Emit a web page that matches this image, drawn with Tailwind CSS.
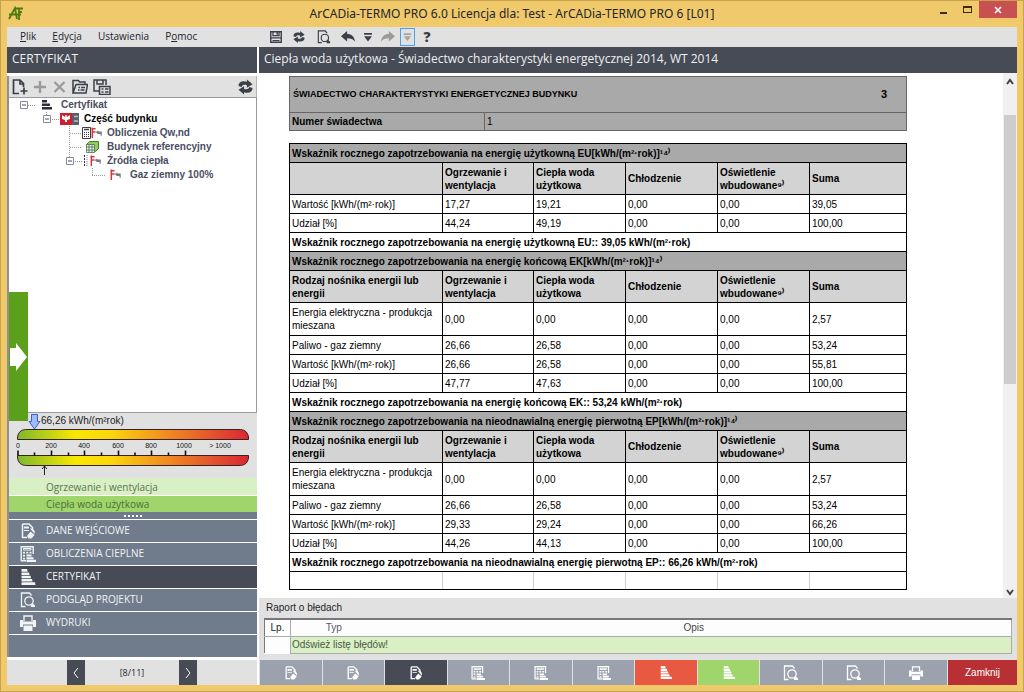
<!DOCTYPE html>
<html lang="pl">
  <head>
    <meta charset="UTF-8" />
    <title>ArCADia-TERMO PRO 6.0</title>
    <meta name="viewport" content="width=device-width, initial-scale=1.0" />

    <!-- Tailwind CSS CDN -->
    <script src="https://cdn.jsdelivr.net/npm/@tailwindcss/browser@4"></script>
  </head>
  <body class="flex min-h-screen flex-col border border-[#c9a24c] bg-[#f0c96a] px-[6px] pb-[6px] font-['Open_Sans',sans-serif] text-xs text-[#22252b]">
    <!-- Ikony -->
    <svg class="hidden">
      <defs>
        <symbol id="i-edit" viewBox="0 0 16 16">
          <path d="M2.500 1h6.500L12.500 4.500V6M7 14.500H2.500V1" fill="none" stroke="currentColor" stroke-width="1.500" />
          <path d="M4 3.500h5v2H4zM4 7h5v1H4z" fill="currentColor" />
          <path d="M10 5.500c3.500-.5 5.500 2 4.500 5.500L13 9z" fill="currentColor" />
          <path d="M10.500 8.500l4 3.500-3 3.500H8.500L7 13z" fill="currentColor" />
        </symbol>
        <symbol id="i-calc" viewBox="0 0 16 16">
          <path d="M1.200 15V.7h12V8M1 14.800H6" fill="none" stroke="currentColor" stroke-width="1.400" />
          <path d="M3.500 2.500h7.500v1.500H3.500z" fill="none" stroke="currentColor" />
          <path d="M3 5.800h2v1.700H3zM6.200 5.800h2v1.700h-2zM9.500 5.800h2v1.700h-2zM3 8.700h2v1.700H3zM3 11.700h2v1.700H3zM6.500 8.500h5v2h-5zM6.500 11.200h7v2h-7zM6.500 13.800H16V16H6.500z" fill="currentColor" />
        </symbol>
        <symbol id="i-cert" viewBox="0 0 16 16">
          <path d="M1.500 0H7l.7 2.700H1.500zM1.500 3.400H9l.6 2.600H1.500zM1.500 6.700h9l.6 2.600H1.500zM1.500 10h10.500l.6 2.500H1.500zM1.500 13.200h13.500l.5 2.800h-14z" fill="currentColor" />
        </symbol>
        <symbol id="i-preview" viewBox="0 0 16 16">
          <path d="M5.500 14.500h-4V1h8l2 2.500" fill="none" stroke="currentColor" stroke-width="1.300" />
          <circle cx="9" cy="9" r="4.200" fill="none" stroke="currentColor" stroke-width="1.300" />
          <path d="M11.500 11.500l3 3M11 14h4" stroke="currentColor" stroke-width="2" />
        </symbol>
        <symbol id="i-print" viewBox="0 0 16 16">
          <path d="M4 6V1h8v5" fill="none" stroke="currentColor" stroke-width="1.400" />
          <path d="M0 5h3v1.500h10V5h3v7h-3V9.500H3V12H0z" fill="currentColor" />
          <path d="M3.500 10.500h9V16h-9z" fill="currentColor" />
        </symbol>
        <symbol id="i-refresh" viewBox="0 0 16 16">
          <path d="M.5 7C.5 2.500 4.500 1 9.500 2.500V0l6 5-6 3.800V6C6.500 5.300 4.500 5.500 4 8z" fill="currentColor" />
          <path d="M15.500 9c0 4.500-4 6-9 4.500V16l-6-5 6-3.800V10c3 .7 5 .5 5.500-2z" fill="currentColor" />
        </symbol>
        <symbol id="i-save" viewBox="0 0 16 16">
          <path d="M2 2h12v12H2z" fill="none" stroke="currentColor" stroke-width="1.600" />
          <path d="M4.500 2v4.500h7V2M2 9h12" fill="none" stroke="currentColor" stroke-width="1.400" />
          <path d="M8.500 2.500h2V5h-2zM4 11.500h8v1H4z" fill="currentColor" />
        </symbol>
        <symbol id="i-undo" viewBox="0 0 16 16">
          <path d="M0 7l7-6v3.500c5 0 8.500 3 9 9C14 10.500 11 9.500 7 9.500V13z" fill="currentColor" />
        </symbol>
        <symbol id="i-down" viewBox="0 0 16 16">
          <path d="M3.500 3.500h9v2h-9zM3.500 7h9L8 13z" fill="currentColor" />
        </symbol>
        <symbol id="i-tap" viewBox="0 0 14 14">
          <path d="M2.500 13V1.500M1.500 3H6M2 6.500h4" fill="none" stroke="#d9323a" stroke-width="1.600" />
          <path d="M6.500 6.500h5.500v4M8.500 5v3h3" fill="none" stroke="#77787c" stroke-width="1.300" />
        </symbol>
        <symbol id="i-box" viewBox="0 0 8 8">
          <path d="M.5.5h7v7h-7z" fill="#fff" stroke="#8a8a8a" />
          <path d="M2 4h4" stroke="#33508f" />
        </symbol>
      </defs>
    </svg>

    <!-- Pasek tytułu -->
    <header class="flex h-[26px] items-start">
      <svg class="mt-[5px] ml-px h-[15px] w-[15px]" viewBox="0 0 15 15" fill="none" stroke="#4f7a12" stroke-width="1.800">
        <path d="M1 13L7 2l2 11M1 8.500h12M7.500 2.500H15M11 3v11M11 6h3" />
      </svg>
      <h1 class="flex-1 pt-[4px] pl-[70px] text-center text-[12px] leading-[18px] font-['Noto_Sans',sans-serif]">ArCADia-TERMO PRO 6.0 Licencja dla: Test - ArCADia-TERMO PRO 6 [L01]</h1>
      <div class="flex h-[17px]">
        <button aria-label="Minimalizuj" class="flex w-6 items-center justify-center pt-[6px]"><span class="h-[2px] w-[7px] bg-[#3a2a10]"></span></button>
        <button aria-label="Maksymalizuj" class="flex w-6 items-center justify-center"><span class="h-[7px] w-[9px] border border-t-2 border-[#3a2a10]"></span></button>
        <button aria-label="Zamknij okno" class="flex w-[38px] items-center justify-center bg-[#c75050]">
          <svg class="h-2 w-2" viewBox="0 0 8 8" stroke="#fff" stroke-width="1.600"><path d="M1 1l6 6M7 1L1 7" /></svg>
        </button>
      </div>
    </header>

    <!-- Menu i pasek narzędzi -->
    <div class="flex h-5 items-center bg-[#e1e1e1] text-[10px]">
      <nav class="flex w-[262px] gap-4 pl-[13px]">
        <a href="#"><u>P</u>lik</a>
        <a href="#"><u>E</u>dycja</a>
        <a href="#">Ustawienia</a>
        <a href="#">P<u>o</u>moc</a>
      </nav>
      <div class="flex items-center text-[#3b3f48]">
        <button aria-label="Zapisz" class="flex w-6"><svg class="h-[14px] w-[14px]"><use href="#i-save" /></svg></button>
        <button aria-label="Odśwież" class="flex w-6"><svg class="h-3 w-3"><use href="#i-refresh" /></svg></button>
        <button aria-label="Podgląd" class="flex w-6"><svg class="h-[14px] w-[14px]"><use href="#i-preview" /></svg></button>
        <button aria-label="Cofnij" class="flex w-5"><svg class="h-[14px] w-[14px]"><use href="#i-undo" /></svg></button>
        <button aria-label="Lista cofania" class="flex w-5"><svg class="h-[14px] w-[14px]"><use href="#i-down" /></svg></button>
        <button aria-label="Ponów" class="flex w-[19px] text-[#9a9a9a]"><svg class="h-[14px] w-[14px] -scale-x-100"><use href="#i-undo" /></svg></button>
        <button aria-label="Lista ponawiania" class="flex border border-[#4ba0ea] text-[#a5a5a5]"><svg class="h-4 w-[13px]"><use href="#i-down" /></svg></button>
        <button aria-label="Pomoc" class="w-6 text-[14px] leading-4 font-extrabold">?</button>
      </div>
    </div>

    <div class="flex flex-1 gap-[2px] bg-white">
      <!-- Lewy panel -->
      <aside class="flex w-[250px] shrink-0 flex-col">
        <h2 class="mb-[3px] h-[26px] bg-[#464b55] pl-[5px] text-[12px] leading-6 text-[#eef0f3]">CERTYFIKAT</h2>
        <div class="flex flex-1 flex-col border-l-2 border-[#8f8f98]">
          <div class="flex h-[21px] items-center gap-[5px] border-r border-[#b5b5b5] bg-[#e1e1e1] px-[3px] text-[#3b3f48]">
            <button aria-label="Nowy"><svg class="h-4 w-4" viewBox="0 0 16 16" fill="none" stroke="currentColor" stroke-width="1.700"><path d="M7 14.500H1.500V1H8l3.500 3.500V8M8 1v4h4M12 8.500v7M8.500 12h7" /></svg></button>
            <button aria-label="Dodaj"><svg class="h-4 w-[14px]" viewBox="0 0 14 16" stroke="#999" stroke-width="2.400"><path d="M7 2v12M1 8h12" /></svg></button>
            <button aria-label="Usuń"><svg class="h-4 w-[15px]" viewBox="0 0 15 16" stroke="#999" stroke-width="2.200"><path d="M2.500 3l10 10M12.500 3l-10 10" /></svg></button>
            <button aria-label="Otwórz"><svg class="h-4 w-4" viewBox="0 0 16 16" fill="none" stroke="currentColor" stroke-width="1.500"><path d="M1 14V1.500h5.500l1 1.500H13v2.500M1 14L4 5.500H15.500L14 14zM6.500 8.500h1.500M9 8.500h4M6 11h1.500M8.500 11h4" /></svg></button>
            <button aria-label="Zapisz jako"><svg class="h-4 w-[18px]" viewBox="0 0 18 16" fill="none" stroke="currentColor" stroke-width="1.500"><path d="M6 12H1V1h12v5M4 1v4h6V1M6.500 7.500h10.500v8H6.500zM8.500 10h2M12 10h3.500M8.500 13h2M12 13h3.500" /></svg></button>
            <button aria-label="Odśwież drzewo" class="ml-auto"><svg class="h-4 w-[15px]"><use href="#i-refresh" /></svg></button>
          </div>

          <!-- Drzewo -->
          <ul class="flex-1 border-t border-r border-b border-[#9a9aa2] bg-white text-[10px] leading-[14px] font-bold text-[#4a4e63] font-['Liberation_Sans',Arial,sans-serif]">
            <li class="flex h-[14px] gap-2">
              <svg class="h-[14px] w-[44px]" viewBox="9 0 44 14">
                <path d="M28 7.500h8" stroke="#999" stroke-dasharray="1 1" />
                <use href="#i-box" x="20" y="3" width="8" height="8" />
                <path d="M42 2h5v2.500h-5zM42 5.500h8v2.500h-8zM42 9h10v2.500H42z" fill="#2b2e33" />
              </svg>
              Certyfikat
            </li>
            <li class="flex h-[14px] gap-[5px] text-black">
              <svg class="h-[14px] w-[70px]" viewBox="9 0 70 14">
                <path d="M46.500 0v4M50 7.500h9" stroke="#999" stroke-dasharray="1 1" />
                <use href="#i-box" x="43" y="3" width="8" height="8" />
                <path d="M60 1h12v12H60z" fill="#cf1f2c" />
                <path d="M62 3l3 2 .5-2h1l.5 2 3-2v4l-3 1v2h-2V8l-3-1z" fill="#fff" />
                <path d="M72 1h7v12h-7z" fill="#59606b" />
                <path d="M74 4.500h4M74 9h4" stroke="#b8bec8" stroke-width="1.500" />
              </svg>
              Część budynku
            </li>
            <li class="flex h-[14px] gap-1">
              <svg class="h-[14px] w-[94px]" viewBox="9 0 94 14">
                <path d="M69.500 0v14M70 7.500h11" stroke="#999" stroke-dasharray="1 1" />
                <path d="M82.500 1.500h8v11h-8z" fill="#fff" stroke="#3c3c44" />
                <path d="M84 3.500h5" stroke="#3c3c44" stroke-width="1.500" />
                <path d="M84 6.500h5M84 8.500h5M84 10.500h5" stroke="#3c3c44" stroke-dasharray="1 1" />
                <use href="#i-tap" x="90" y="0" width="13" height="13" />
              </svg>
              Obliczenia Qw,nd
            </li>
            <li class="flex h-[14px] gap-1">
              <svg class="h-[14px] w-[94px]" viewBox="9 0 94 14">
                <path d="M69.500 0v14M70 7.500h12" stroke="#999" stroke-dasharray="1 1" />
                <path d="M86.500 4.500l3-3h9v7l-3 3z" fill="#8ed05a" stroke="#3d7a2c" />
                <path d="M86.500 4.500h8v8h-8zM86.500 7h8M86.500 10h8M89 4.500v8M92 4.500v8" fill="#e6f4e0" stroke="#4a6f58" stroke-width=".8" />
              </svg>
              Budynek referencyjny
            </li>
            <li class="flex h-[14px] gap-1">
              <svg class="h-[14px] w-[94px]" viewBox="9 0 94 14">
                <path d="M69.500 0v4M73 7.500h10" stroke="#999" stroke-dasharray="1 1" />
                <use href="#i-box" x="66" y="3" width="8" height="8" />
                <path d="M84.500 1v12" stroke="#333" stroke-dasharray="2 1" />
                <path d="M87 1v12" stroke="#7f6fb8" stroke-dasharray="1 1" />
                <use href="#i-tap" x="89" y="0" width="13" height="13" />
              </svg>
              Źródła ciepła
            </li>
            <li class="flex h-[14px] gap-1">
              <svg class="h-[14px] w-[117px]" viewBox="9 0 117 14">
                <path d="M92.500 0v7M92 7.500h14" stroke="#999" stroke-dasharray="1 1" />
                <use href="#i-tap" x="109" y="0" width="13" height="13" />
              </svg>
              Gaz ziemny 100%
            </li>
          </ul>

          <!-- Skala -->
          <div class="relative">
            <svg class="block w-full bg-[#e1e1e1] font-['Liberation_Sans',Arial,sans-serif]" viewBox="9 413 248 65">
              <linearGradient id="scale">
                <stop offset="0" stop-color="#7cb92c" />
                <stop offset=".25" stop-color="#f8e800" />
                <stop offset=".4" stop-color="#fbd80c" />
                <stop offset=".65" stop-color="#f08a22" />
                <stop offset="1" stop-color="#da2735" />
              </linearGradient>
              <text x="41" y="424" font-size="10" fill="#222">66,26 kWh/(m²rok)</text>
              <path d="M17.500 439.500V437q1-7 8-7.500h215q7 .5 8 7.500v2.500z" fill="url(#scale)" stroke="#3a2020" />
              <path d="M17.500 455.500v2.500q1 7 8 7.500h215q7-.5 8-7.500v-2.500z" fill="url(#scale)" stroke="#3a2020" />
              <path d="M31.500 414.500h6v7h2.500L34.500 429 29 421.500h2.500z" fill="#9dbcff" stroke="#3f5fd0" />
              <path d="M18 450.500v5M51.500 450.500v5M84.500 450.500v5M118.500 450.500v5M151.500 450.500v5M185.500 450.500v5M34.500 452.500v3M68.500 452.500v3M101.500 452.500v3M135 452.500v3M168.500 452.500v3" stroke="#111" stroke-width="1.600" />
              <g font-size="7" fill="#111" text-anchor="middle">
                <text x="18" y="448">0</text>
                <text x="51" y="448">200</text>
                <text x="84" y="448">400</text>
                <text x="118" y="448">600</text>
                <text x="151" y="448">800</text>
                <text x="184" y="448">1000</text>
                <text x="220" y="448">&gt; 1000</text>
              </g>
              <path d="M44.500 475v-9M42 469l2.500-3 2.500 3" fill="none" stroke="#222" />
            </svg>
            <button aria-label="Rozwiń panel" class="absolute bottom-[57px] left-0 flex h-[129px] w-[19px] items-center bg-[#5aa01a]">
              <svg class="h-7 w-[19px]" viewBox="0 0 19 28" fill="#fff"><path d="M1 5h6V0l11 14L7 28v-5H1z" /></svg>
            </button>
          </div>

          <!-- Etapy -->
          <div class="flex flex-col gap-px text-[10px] text-[#5d7355]">
            <a href="#" class="h-[17px] bg-[#d9efc4] pl-[37px] leading-[18px]">Ogrzewanie i wentylacja</a>
            <a href="#" class="h-4 bg-[#9fd56b] pl-[37px] leading-4 text-[#4b7038]">Ciepła woda użytkowa</a>
          </div>
          <div class="flex h-[7px] items-center justify-center gap-[2px] bg-[#707c8c]">
            <i class="h-[2px] w-[2px] bg-white"></i><i class="h-[2px] w-[2px] bg-white"></i><i class="h-[2px] w-[2px] bg-white"></i><i class="h-[2px] w-[2px] bg-white"></i><i class="h-[2px] w-[2px] bg-white"></i>
          </div>
          <nav class="flex flex-col text-[10px] text-[#f1f3f5]">
            <a href="#" class="flex h-[23px] items-center gap-[10px] border-t border-white bg-[#707c8c] pl-[11px]"><svg class="h-4 w-4"><use href="#i-edit" /></svg>DANE WEJŚCIOWE</a>
            <a href="#" class="flex h-[23px] items-center gap-[10px] border-t border-white bg-[#707c8c] pl-[11px]"><svg class="h-4 w-4"><use href="#i-calc" /></svg>OBLICZENIA CIEPLNE</a>
            <a href="#" class="flex h-[23px] items-center gap-[10px] border-t border-white bg-[#464b55] pl-[11px]"><svg class="h-4 w-4"><use href="#i-cert" /></svg>CERTYFIKAT</a>
            <a href="#" class="flex h-[23px] items-center gap-[10px] border-t border-white bg-[#707c8c] pl-[11px]"><svg class="h-4 w-4"><use href="#i-preview" /></svg>PODGLĄD PROJEKTU</a>
            <a href="#" class="flex h-[23px] items-center gap-[10px] border-t border-white bg-[#707c8c] pl-[11px]"><svg class="h-4 w-4"><use href="#i-print" /></svg>WYDRUKI</a>
            <div class="h-[23px] border-t border-white bg-[#707c8c]"></div>
          </nav>
        </div>
        <div class="mt-[3px] flex h-[25px] items-center justify-center bg-[#e1e1e1] text-[9px]">
          <button aria-label="Poprzedni" class="flex h-full w-[18px] items-center justify-center bg-[#464b55]"><svg class="h-3 w-2" viewBox="0 0 8 12" fill="none" stroke="#fff"><path d="M6 1L2 6l4 5" /></svg></button>
          <span class="w-[94px] text-center">[8/11]</span>
          <button aria-label="Następny" class="flex h-full w-[18px] items-center justify-center bg-[#464b55]"><svg class="h-3 w-2" viewBox="0 0 8 12" fill="none" stroke="#fff"><path d="M2 1l4 5-4 5" /></svg></button>
        </div>
      </aside>

      <!-- Dokument -->
      <main class="flex min-w-0 flex-1 flex-col">
        <h2 class="h-[26px] bg-[#464b55] pl-[5px] text-[12px] leading-6 text-[#eef0f3]">Ciepła woda użytkowa - Świadectwo charakterystyki energetycznej 2014, WT 2014</h2>
        <div class="flex flex-1">
          <div class="flex-1 pt-[3px] pl-[30px] text-[10px] leading-[13px] text-black font-['Liberation_Sans',Arial,sans-serif]">
            <table class="w-[618px] table-fixed border-collapse border border-[#666] bg-[#a9a9a9] font-bold">
              <colgroup><col class="w-[195px]" /><col /></colgroup>
              <tr class="h-9">
                <td colspan="2" class="border border-[#666] px-[3px] text-[9px]">
                  <div class="flex items-center justify-between pr-4"><span>ŚWIADECTWO CHARAKTERYSTYKI ENERGETYCZNEJ BUDYNKU</span><span class="text-[11px]">3</span></div>
                </td>
              </tr>
              <tr class="h-[18px]">
                <td class="border border-[#666] px-[2px]">Numer świadectwa</td>
                <td class="border border-[#666] px-[2px] font-normal">1</td>
              </tr>
            </table>

            <table class="mt-3 w-[618px] table-fixed border-collapse border border-black text-left [&_td]:border [&_td]:border-black [&_td]:px-[2px] [&_th]:border [&_th]:border-black [&_th]:px-[2px]">
              <colgroup>
                <col class="w-[153px]" /><col class="w-[91px]" /><col class="w-[92px]" /><col class="w-[92px]" /><col class="w-[92px]" /><col />
              </colgroup>
              <tbody>
                <tr class="h-[19px] bg-[#a9a9a9]"><th colspan="6">Wskaźnik rocznego zapotrzebowania na energię użytkowną EU[kWh/(m²·rok)]¹⁴⁾</th></tr>
                <tr class="h-8 bg-[#d3d3d3]"><th></th><th>Ogrzewanie i wentylacja</th><th>Ciepła woda użytkowa</th><th>Chłodzenie</th><th>Oświetlenie wbudowane⁹⁾</th><th>Suma</th></tr>
                <tr class="h-[19px]"><td>Wartość [kWh/(m²·rok)]</td><td>17,27</td><td>19,21</td><td>0,00</td><td>0,00</td><td>39,05</td></tr>
                <tr class="h-[19px]"><td>Udział [%]</td><td>44,24</td><td>49,19</td><td>0,00</td><td>0,00</td><td>100,00</td></tr>
                <tr class="h-[19px]"><th colspan="6">Wskaźnik rocznego zapotrzebowania na energię użytkowną EU:: 39,05 kWh/(m²·rok)</th></tr>
              </tbody>
              <tbody>
                <tr class="h-[19px] bg-[#a9a9a9]"><th colspan="6">Wskaźnik rocznego zapotrzebowania na energię końcową EK[kWh/(m²·rok)]¹⁴⁾</th></tr>
                <tr class="h-8 bg-[#d3d3d3]"><th>Rodzaj nośnika energii lub energii</th><th>Ogrzewanie i wentylacja</th><th>Ciepła woda użytkowa</th><th>Chłodzenie</th><th>Oświetlenie wbudowane⁹⁾</th><th>Suma</th></tr>
                <tr class="h-[33px]"><td>Energia elektryczna - produkcja mieszana</td><td>0,00</td><td>0,00</td><td>0,00</td><td>0,00</td><td>2,57</td></tr>
                <tr class="h-[19px]"><td>Paliwo - gaz ziemny</td><td>26,66</td><td>26,58</td><td>0,00</td><td>0,00</td><td>53,24</td></tr>
                <tr class="h-[19px]"><td>Wartość [kWh/(m²·rok)]</td><td>26,66</td><td>26,58</td><td>0,00</td><td>0,00</td><td>55,81</td></tr>
                <tr class="h-[19px]"><td>Udział [%]</td><td>47,77</td><td>47,63</td><td>0,00</td><td>0,00</td><td>100,00</td></tr>
                <tr class="h-[19px]"><th colspan="6">Wskaźnik rocznego zapotrzebowania na energię końcową EK:: 53,24 kWh/(m²·rok)</th></tr>
              </tbody>
              <tbody>
                <tr class="h-[19px] bg-[#a9a9a9]"><th colspan="6">Wskaźnik rocznego zapotrzebowania na nieodnawialną energię pierwotną EP[kWh/(m²·rok)]¹⁴⁾</th></tr>
                <tr class="h-8 bg-[#d3d3d3]"><th>Rodzaj nośnika energii lub energii</th><th>Ogrzewanie i wentylacja</th><th>Ciepła woda użytkowa</th><th>Chłodzenie</th><th>Oświetlenie wbudowane⁹⁾</th><th>Suma</th></tr>
                <tr class="h-[33px]"><td>Energia elektryczna - produkcja mieszana</td><td>0,00</td><td>0,00</td><td>0,00</td><td>0,00</td><td>2,57</td></tr>
                <tr class="h-[19px]"><td>Paliwo - gaz ziemny</td><td>26,66</td><td>26,58</td><td>0,00</td><td>0,00</td><td>53,24</td></tr>
                <tr class="h-[19px]"><td>Wartość [kWh/(m²·rok)]</td><td>29,33</td><td>29,24</td><td>0,00</td><td>0,00</td><td>66,26</td></tr>
                <tr class="h-[19px]"><td>Udział [%]</td><td>44,26</td><td>44,13</td><td>0,00</td><td>0,00</td><td>100,00</td></tr>
                <tr class="h-[19px]"><th colspan="6">Wskaźnik rocznego zapotrzebowania na nieodnawialną energię pierwotną EP:: 66,26 kWh/(m²·rok)</th></tr>
                <tr class="h-[18px] [&>td]:border-r-[#ccc]! [&>td:last-child]:border-r-black! [&>td:not(:first-child)]:border-l-[#ccc]!"><td></td><td></td><td></td><td></td><td></td><td></td></tr>
              </tbody>
            </table>
          </div>
          <!-- Pasek przewijania -->
          <div class="flex w-[14px] flex-col items-center bg-[#f0f0f0]">
            <svg class="my-[5px] h-2 w-2" viewBox="0 0 8 8" fill="none" stroke="#444" stroke-width="2"><path d="M1 6l3-4 3 4" /></svg>
            <div class="mt-6 h-[269px] w-3 bg-[#cdcdcd]"></div>
            <svg class="mt-auto mb-[2px] h-2 w-2" viewBox="0 0 8 8" fill="none" stroke="#444" stroke-width="2"><path d="M1 2l3 4 3-4" /></svg>
          </div>
        </div>

        <!-- Raport o błędach -->
        <section class="h-[62px] bg-[#e1e1e1] px-[5px] pt-[3px] text-[10px] font-['Liberation_Sans',Arial,sans-serif]">
          <h3 class="h-[17px] pl-[2px] leading-[14px]">Raport o błędach</h3>
          <table class="w-full table-fixed border border-t-2 border-[#77777c] border-r-[#aaa] border-b-white bg-[#fdfdfd] leading-4">
            <colgroup><col class="w-[26px]" /><col class="w-[86px]" /><col /></colgroup>
            <tr class="h-4 border-b border-[#aaa]"><th class="border-r border-[#aaa] font-normal">Lp.</th><th class="font-normal text-[#555a70]">Typ</th><th class="font-normal text-[#444]">Opis</th></tr>
            <tr class="h-[17px]"><td class="border-r border-[#aaa]"></td><td colspan="2" class="border-b border-[#aaa] bg-[#d9efc4] pl-px text-[#4a5a44]">Odśwież listę błędów!</td></tr>
          </table>
        </section>

        <!-- Dolny pasek -->
        <div class="flex h-[25px] gap-px bg-[#dfe1e6] pl-px text-white">
          <button aria-label="Etap 1" class="flex flex-1 items-center justify-center bg-[#9ca1ae]"><svg class="h-[14px] w-[14px]"><use href="#i-edit" /></svg></button>
          <button aria-label="Etap 2" class="flex flex-1 items-center justify-center bg-[#9ca1ae]"><svg class="h-[14px] w-[14px]"><use href="#i-edit" /></svg></button>
          <button aria-label="Etap 3" class="flex flex-1 items-center justify-center bg-[#464b55]"><svg class="h-[14px] w-[14px]"><use href="#i-edit" /></svg></button>
          <button aria-label="Etap 4" class="flex flex-1 items-center justify-center bg-[#9ca1ae]"><svg class="h-[14px] w-[14px]"><use href="#i-calc" /></svg></button>
          <button aria-label="Etap 5" class="flex flex-1 items-center justify-center bg-[#9ca1ae]"><svg class="h-[14px] w-[14px]"><use href="#i-calc" /></svg></button>
          <button aria-label="Etap 6" class="flex flex-1 items-center justify-center bg-[#9ca1ae]"><svg class="h-[14px] w-[14px]"><use href="#i-calc" /></svg></button>
          <button aria-label="Etap 7" class="flex flex-1 items-center justify-center bg-[#e95840]"><svg class="h-[13px] w-[14px]"><use href="#i-cert" /></svg></button>
          <button aria-label="Etap 8" class="flex flex-1 items-center justify-center bg-[#9fd56b]"><svg class="h-[13px] w-[14px]"><use href="#i-cert" /></svg></button>
          <button aria-label="Etap 9" class="flex flex-1 items-center justify-center bg-[#9ca1ae]"><svg class="h-4 w-4"><use href="#i-preview" /></svg></button>
          <button aria-label="Etap 10" class="flex flex-1 items-center justify-center bg-[#9ca1ae]"><svg class="h-4 w-4"><use href="#i-preview" /></svg></button>
          <button aria-label="Etap 11" class="flex flex-1 items-center justify-center bg-[#9ca1ae]"><svg class="h-[14px] w-[14px]"><use href="#i-print" /></svg></button>
          <button class="w-[69px] bg-[#b83034] text-[10px] font-['Liberation_Sans',Arial,sans-serif]">Zamknij</button>
        </div>
      </main>
    </div>
  </body>
</html>
